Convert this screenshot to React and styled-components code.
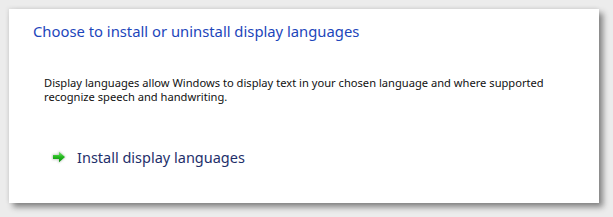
import React from "react";
import styled, { createGlobalStyle } from "styled-components";

const GlobalStyle = createGlobalStyle`
  html, body {
    margin: 0;
    padding: 0;
    background: #ececec;
  }
  body {
    font-family: "Noto Sans", "Open Sans", sans-serif;
  }
`;

const Page = styled.div`
  width: 613px;
  height: 217px;
  padding: 9px 0 0 9px;
  box-sizing: border-box;
`;

const Panel = styled.div`
  width: 590px;
  height: 194px;
  box-sizing: border-box;
  background: #ffffff;
  box-shadow: 4px 4px 6px rgba(0, 0, 0, 0.45), -1px -1px 4px rgba(0, 0, 0, 0.08);
  padding: 11px 24px 0 24px;
  display: flex;
  flex-direction: column;
`;

const Title = styled.h1`
  margin: 0;
  font-size: 14.8px;
  font-weight: 400;
  color: #1d46bb;
  line-height: 22px;
`;

const Description = styled.p`
  margin: 34px 0 0 11px;
  font-size: 11.15px;
  line-height: 14px;
  color: #111;
  width: 520px;
`;

const TaskLink = styled.a`
  margin: 43px 0 0 18px;
  display: flex;
  align-items: center;
  gap: 10px;
  font-size: 14.5px;
  line-height: 20px;
  color: #1e2f6a;
  text-decoration: none;
  cursor: pointer;
`;

const Arrow = () => (
  <svg width="16" height="14" viewBox="0 0 16 14">
    <defs>
      <linearGradient id="ag" x1="0" y1="0" x2="0" y2="1">
        <stop offset="0" stopColor="#7ae872" />
        <stop offset="0.5" stopColor="#22b81c" />
        <stop offset="1" stopColor="#0b8a10" />
      </linearGradient>
      <filter id="halo" x="-30%" y="-30%" width="160%" height="160%">
        <feGaussianBlur stdDeviation="0.8" />
      </filter>
    </defs>
    <path d="M1.5 4.5 H7.5 V1 L14.5 7 L7.5 13 V9.5 H1.5 Z" fill="#b8c2b8" filter="url(#halo)" />
    <path d="M2 5 H8 V1.8 L14 7 L8 12.2 V9 H2 Z" fill="url(#ag)" />
  </svg>
);

export default function App() {
  return (
    <>
      <GlobalStyle />
      <Page>
        <Panel>
          <Title>Choose to install or uninstall display languages</Title>
          <Description>
            Display languages allow Windows to display text in your chosen language and where supported
            recognize speech and handwriting.
          </Description>
          <TaskLink>
            <Arrow />
            Install display languages
          </TaskLink>
        </Panel>
      </Page>
    </>
  );
}
